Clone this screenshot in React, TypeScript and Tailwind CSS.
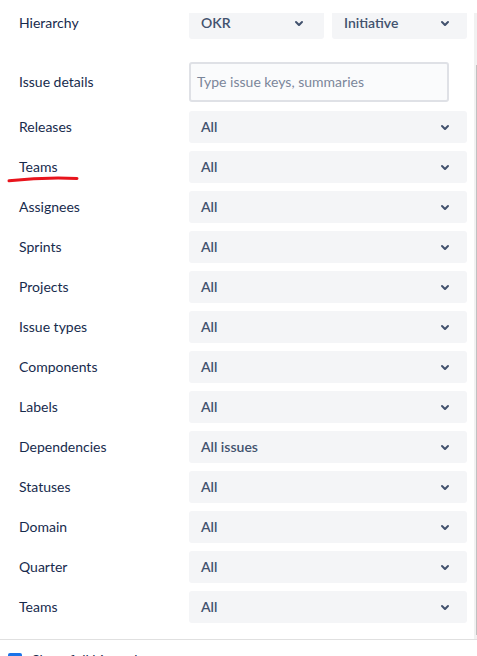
import React from "react";

const Chevron = () => (
  <svg width="24" height="24" viewBox="0 0 24 24" aria-hidden="true">
    <path
      d="M8.292 10.293a1.009 1.009 0 0 0 0 1.419l2.939 2.965c.218.215.5.322.779.322s.556-.107.769-.322l2.93-2.955a1.01 1.01 0 0 0 0-1.419.987.987 0 0 0-1.406 0l-2.298 2.317-2.307-2.327a.99.99 0 0 0-1.406 0z"
      fill="#42526E"
    />
  </svg>
);

const rows: [string, string][] = [
  ["Releases", "All"],
  ["Teams", "All"],
  ["Assignees", "All"],
  ["Sprints", "All"],
  ["Projects", "All"],
  ["Issue types", "All"],
  ["Components", "All"],
  ["Labels", "All"],
  ["Dependencies", "All issues"],
  ["Statuses", "All"],
  ["Domain", "All"],
  ["Quarter", "All"],
  ["Teams", "All"],
];

export default function App() {
  return (
    <div className="relative w-[477px] h-[656px] overflow-hidden bg-white font-['Lato','Liberation_Sans',sans-serif] text-[14px]">
      <div className="pt-[13px] flex">
        <div className="w-[474px] h-[626px] overflow-hidden">
          <div className="-mt-[6px] flex flex-col">
            <div className="flex items-center h-8">
              <div className="w-[189px] pl-[19px] pb-[2px] text-[#172B4D]">Hierarchy</div>
              <div className="flex gap-2">
                <div className="w-[135px] h-8 rounded-[3px] bg-[#F4F5F7] flex items-center justify-between pl-3 pr-[13px]">
                  <span className="font-semibold text-[#42526E] pb-[2px]">OKR</span>
                  <Chevron />
                </div>
                <div className="w-[135px] h-8 rounded-[3px] bg-[#F4F5F7] flex items-center justify-between pl-3 pr-[10px]">
                  <span className="font-semibold text-[#42526E] pb-[2px]">Initiative</span>
                  <Chevron />
                </div>
              </div>
            </div>
            <div className="flex items-center h-10 mt-[23px]">
              <div className="w-[189px] pl-[19px] pb-[2px] text-[#172B4D]">Issue details</div>
              <div className="w-[260px] h-10 rounded-[3px] border-2 border-[#DFE1E6] bg-[#FAFBFC] flex items-center px-[6px]">
                <span className="text-[#7A869A] pb-[2px]">Type issue keys, summaries</span>
              </div>
            </div>
            <div className="flex flex-col gap-2 mt-[9px]">
              {rows.map(([label, value], i) => (
                <div key={i} className="flex items-center h-8">
                  <div className="w-[189px] pl-[19px] pb-[2px] text-[#172B4D]">{label}</div>
                  <div className="w-[278px] h-8 rounded-[3px] bg-[#F4F5F7] flex items-center justify-between pl-3 pr-[10px]">
                    <span className="font-semibold text-[#42526E] pb-[2px]">{value}</span>
                    <Chevron />
                  </div>
                </div>
              ))}
            </div>
          </div>
        </div>
        <div className="w-[3px] h-[626px] bg-[#F1F1F1] flex justify-end">
          <div className="w-px h-[570px] mt-[52px] bg-[#C1C1C1]" />
        </div>
      </div>
      <div className="border-t border-[#E0E0E0] flex items-start gap-[10px] pl-2 pt-[13px]">
        <div className="w-[14px] h-[14px] rounded-[2px] bg-[#1A73E8]" />
        <span className="-mt-[1px] leading-[16px] text-[#172B4D]">Show full hierarchy</span>
      </div>
      <svg className="absolute left-0 top-[172px]" width="90" height="14" viewBox="0 0 90 14" aria-hidden="true">
        <path d="M9 8.8 C 30 6.5, 55 5.5, 77 6.5" stroke="#E8141C" strokeWidth="3" fill="none" strokeLinecap="round" />
      </svg>
    </div>
  );
}
